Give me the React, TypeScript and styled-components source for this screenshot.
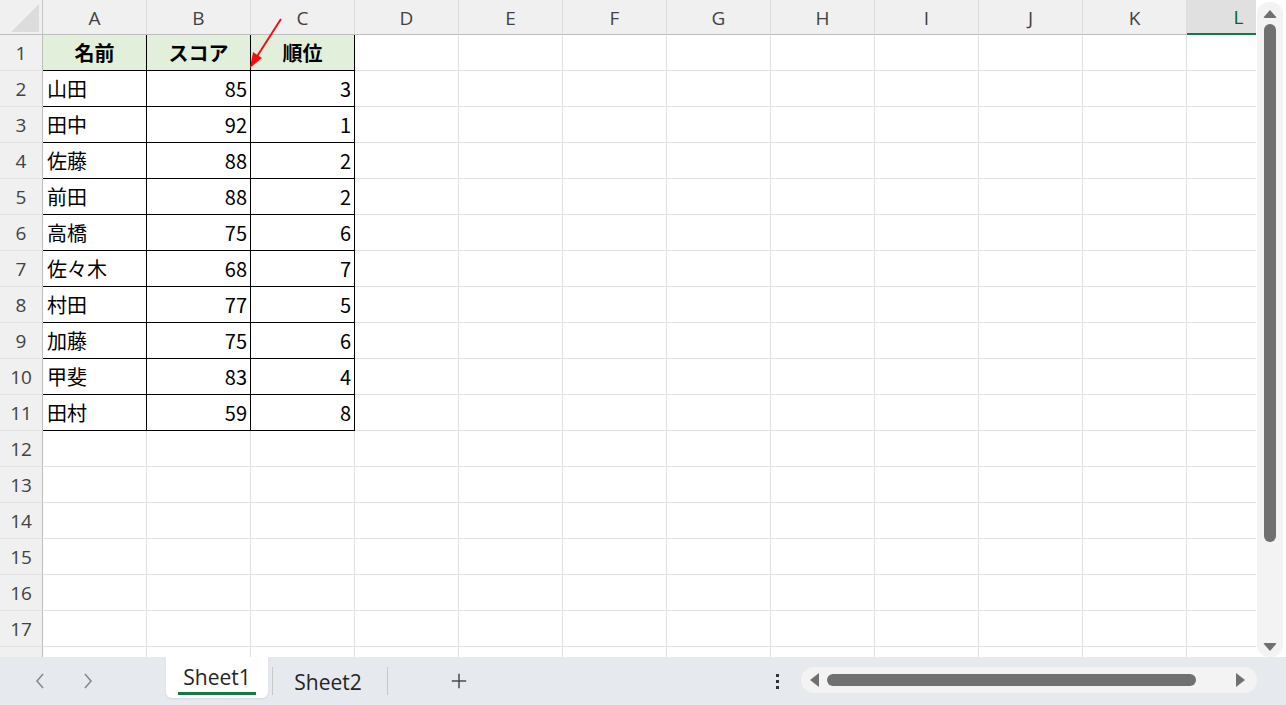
import {FC} from 'react'
import styled, {createGlobalStyle} from 'styled-components'

const COLS = ['A', 'B', 'C', 'D', 'E', 'F', 'G', 'H', 'I', 'J', 'K', 'L']
const ROW_COUNT = 18

const data: [string, number, number][] = [
  ['山田', 85, 3],
  ['田中', 92, 1],
  ['佐藤', 88, 2],
  ['前田', 88, 2],
  ['高橋', 75, 6],
  ['佐々木', 68, 7],
  ['村田', 77, 5],
  ['加藤', 75, 6],
  ['甲斐', 83, 4],
  ['田村', 59, 8]
]

const GlobalStyle = createGlobalStyle`
  html, body {
    margin: 0;
    padding: 0;
    background: #ffffff;
    overflow: hidden;
  }
  * {
    box-sizing: border-box;
  }
`

const App: FC = () => {
  const rows = Array.from({length: ROW_COUNT}, (_, i) => i + 1)

  const renderCell = (row: number, col: number) => {
    if (row === 1 && col < 3) {
      const head = ['名前', 'スコア', '順位'][col]
      return <TableHead key={`${row}-${col}`}>{head}</TableHead>
    }
    if (row >= 2 && row <= 11 && col < 3) {
      const item = data[row - 2]
      return (
        <TableCell key={`${row}-${col}`} $align={col === 0 ? 'left' : 'right'}>
          {item[col]}
        </TableCell>
      )
    }
    return <Cell key={`${row}-${col}`} />
  }

  return (
    <Screen>
      <GlobalStyle />
      <Body>
        <Sheet>
          <Corner>
            <CornerTriangle />
          </Corner>
          {COLS.map(c => (
            <ColHeader key={c} $selected={c === 'L'}>
              {c}
            </ColHeader>
          ))}
          {rows.map(r => (
            <Row key={r}>
              {/* row 18 only peeks out, its number is hidden */}
              <RowHeader>{r < ROW_COUNT ? r : ''}</RowHeader>
              {COLS.map((_, ci) => renderCell(r, ci))}
            </Row>
          ))}
          <Arrow width="60" height="80" viewBox="0 0 60 80">
            <line x1="33" y1="19" x2="8" y2="58" stroke="#ee1111" strokeWidth="2" />
            <polygon points="2,68 5,52 14,58" fill="#ee1111" />
          </Arrow>
        </Sheet>
        <VScroll>
          <ArrowUp />
          <VThumb />
          <ArrowDown />
        </VScroll>
      </Body>
      <TabBar>
        <NavButtons>
          <NavArrow viewBox="0 0 12 20">
            <polyline points="9,3 3,10 9,17" />
          </NavArrow>
          <NavArrow viewBox="0 0 12 20">
            <polyline points="3,3 9,10 3,17" />
          </NavArrow>
        </NavButtons>
        <Tab $active>
          <TabLabel $active>Sheet1</TabLabel>
        </Tab>
        <Divider />
        <Tab>
          <TabLabel>Sheet2</TabLabel>
        </Tab>
        <Divider />
        <AddButton viewBox="0 0 20 20">
          <line x1="10" y1="2" x2="10" y2="18" />
          <line x1="2" y1="10" x2="18" y2="10" />
        </AddButton>
        <Spacer />
        <MoreDots>
          <span />
          <span />
          <span />
        </MoreDots>
        <HScroll>
          <ArrowLeft />
          <HThumb />
          <ArrowRight />
        </HScroll>
      </TabBar>
    </Screen>
  )
}

const Screen = styled.div`
  width: 1286px;
  height: 705px;
  display: flex;
  flex-direction: column;
  background: #e6e9ee;
  font-family: 'Noto Sans CJK JP', 'Noto Sans', sans-serif;
`

const Body = styled.div`
  height: 657px;
  display: flex;
  background: #ffffff;
`

const Sheet = styled.div`
  position: relative;
  width: 1256px;
  height: 657px;
  overflow: hidden;
  display: grid;
  grid-template-columns: 43px repeat(12, 104px);
  grid-template-rows: 35px repeat(${ROW_COUNT}, 36px);
`

const Row = styled.div`
  display: contents;
`

const Corner = styled.div`
  background: #f0f0f0;
  border-right: 1px solid #c6c6c6;
  border-bottom: 1px solid #bdbdbd;
  position: relative;
`

const CornerTriangle = styled.div`
  position: absolute;
  left: 11px;
  top: 4px;
  width: 0;
  height: 0;
  border-left: 28px solid transparent;
  border-bottom: 28px solid #dcdcdc;
`

const ColHeader = styled.div<{$selected?: boolean}>`
  display: flex;
  align-items: center;
  justify-content: center;
  background: ${p => (p.$selected ? '#e0e0e0' : '#f0f0f0')};
  border-right: 1px solid #dcdcdc;
  border-bottom: ${p => (p.$selected ? '2px solid #107c41' : '1px solid #bdbdbd')};
  color: ${p => (p.$selected ? '#0e5c2f' : '#424242')};
  font-family: 'Open Sans', 'Noto Sans', sans-serif;
  font-size: 19px;
  padding-top: 1px;
`

const RowHeader = styled.div`
  display: flex;
  align-items: center;
  justify-content: center;
  background: #f0f0f0;
  border-right: 1px solid #bdbdbd;
  border-bottom: 1px solid #e3e3e3;
  color: #424242;
  font-family: 'Open Sans', 'Noto Sans', sans-serif;
  font-size: 19px;
`

const Cell = styled.div`
  border-right: 1px solid #e1e1e1;
  border-bottom: 1px solid #e1e1e1;
`

const TableHead = styled.div`
  display: flex;
  align-items: center;
  justify-content: center;
  background: #e2efda;
  border-right: 1px solid #000000;
  border-bottom: 1px solid #000000;
  font-family: 'Noto Sans CJK JP', sans-serif;
  font-weight: 700;
  font-size: 20px;
  color: #000000;
`

const TableCell = styled.div<{$align: 'left' | 'right'}>`
  display: flex;
  align-items: center;
  justify-content: ${p => (p.$align === 'left' ? 'flex-start' : 'flex-end')};
  padding: 0 3px 0 4px;
  border-right: 1px solid #000000;
  border-bottom: 1px solid #000000;
  font-family: 'Noto Sans CJK JP', sans-serif;
  font-size: 20px;
  color: #000000;
`

const Arrow = styled.svg`
  position: absolute;
  left: 248px;
  top: 0;
  pointer-events: none;
`

const VScroll = styled.div`
  width: 30px;
  padding: 2px 3px 2px 1px;
  display: flex;
  flex-direction: column;
  align-items: center;
  background: #ffffff;
  position: relative;
  &::before {
    content: '';
    position: absolute;
    inset: 2px 3px 0 1px;
    background: #f3f3f3;
    border-radius: 12px;
  }
`

const ArrowUp = styled.div`
  position: relative;
  margin-top: 8px;
  width: 0;
  height: 0;
  border-left: 7px solid transparent;
  border-right: 7px solid transparent;
  border-bottom: 8px solid #707070;
  border-radius: 2px;
`

const ArrowDown = styled.div`
  position: relative;
  margin-top: auto;
  margin-bottom: 4px;
  width: 0;
  height: 0;
  border-left: 7px solid transparent;
  border-right: 7px solid transparent;
  border-top: 8px solid #707070;
  border-radius: 2px;
`

const VThumb = styled.div`
  position: relative;
  margin-top: 6px;
  width: 12px;
  height: 518px;
  background: #707070;
  border-radius: 6px;
`

const TabBar = styled.div`
  flex: 1;
  display: flex;
  align-items: flex-start;
  background: #e6e9ee;
`

const NavButtons = styled.div`
  width: 166px;
  height: 48px;
  display: flex;
  align-items: center;
  gap: 36px;
  padding-left: 34px;
`

const NavArrow = styled.svg`
  width: 12px;
  height: 20px;
  fill: none;
  stroke: #8a8a8a;
  stroke-width: 1.6;
`

const Tab = styled.div<{$active?: boolean}>`
  height: 41px;
  padding: 0 ${p => (p.$active ? '12px' : '16px')};
  display: flex;
  align-items: center;
  background: ${p => (p.$active ? '#ffffff' : 'transparent')};
  border-radius: 0 0 6px 6px;
  box-shadow: ${p => (p.$active ? '0 1px 2px rgba(0,0,0,0.08)' : 'none')};
`

const TabLabel = styled.span<{$active?: boolean}>`
  font-family: 'Open Sans', 'Noto Sans', sans-serif;
  font-size: 21px;
  color: #242424;
  padding: ${p => (p.$active ? '2px 0 1px' : '4px 0 0')};
  margin-top: ${p => (p.$active ? '0' : '5px')};
  border-bottom: ${p => (p.$active ? '3px solid #107c41' : '0')};
  min-width: 78px;
  text-align: center;
`

const Divider = styled.div`
  width: 1px;
  height: 28px;
  margin-top: 10px;
  margin-left: 4px;
  background: #c8c8c8;
`

const AddButton = styled.svg`
  width: 18px;
  height: 18px;
  margin: 15px 0 0 62px;
  stroke: #444444;
  stroke-width: 1.6;
`

const Spacer = styled.div`
  flex: 1;
`

const MoreDots = styled.div`
  height: 48px;
  display: flex;
  flex-direction: column;
  justify-content: center;
  gap: 3px;
  margin-right: 22px;
  span {
    width: 3px;
    height: 3px;
    background: #333333;
  }
`

const HScroll = styled.div`
  margin-top: 10px;
  margin-right: 29px;
  width: 456px;
  height: 26px;
  background: #f3f3f3;
  border-radius: 13px;
  display: flex;
  align-items: center;
  padding: 0 12px 0 9px;
`

const ArrowLeft = styled.div`
  width: 0;
  height: 0;
  border-top: 7px solid transparent;
  border-bottom: 7px solid transparent;
  border-right: 9px solid #707070;
`

const ArrowRight = styled.div`
  margin-left: auto;
  width: 0;
  height: 0;
  border-top: 7px solid transparent;
  border-bottom: 7px solid transparent;
  border-left: 9px solid #707070;
`

const HThumb = styled.div`
  margin-left: 8px;
  width: 369px;
  height: 12px;
  background: #707070;
  border-radius: 6px;
`

export default App
